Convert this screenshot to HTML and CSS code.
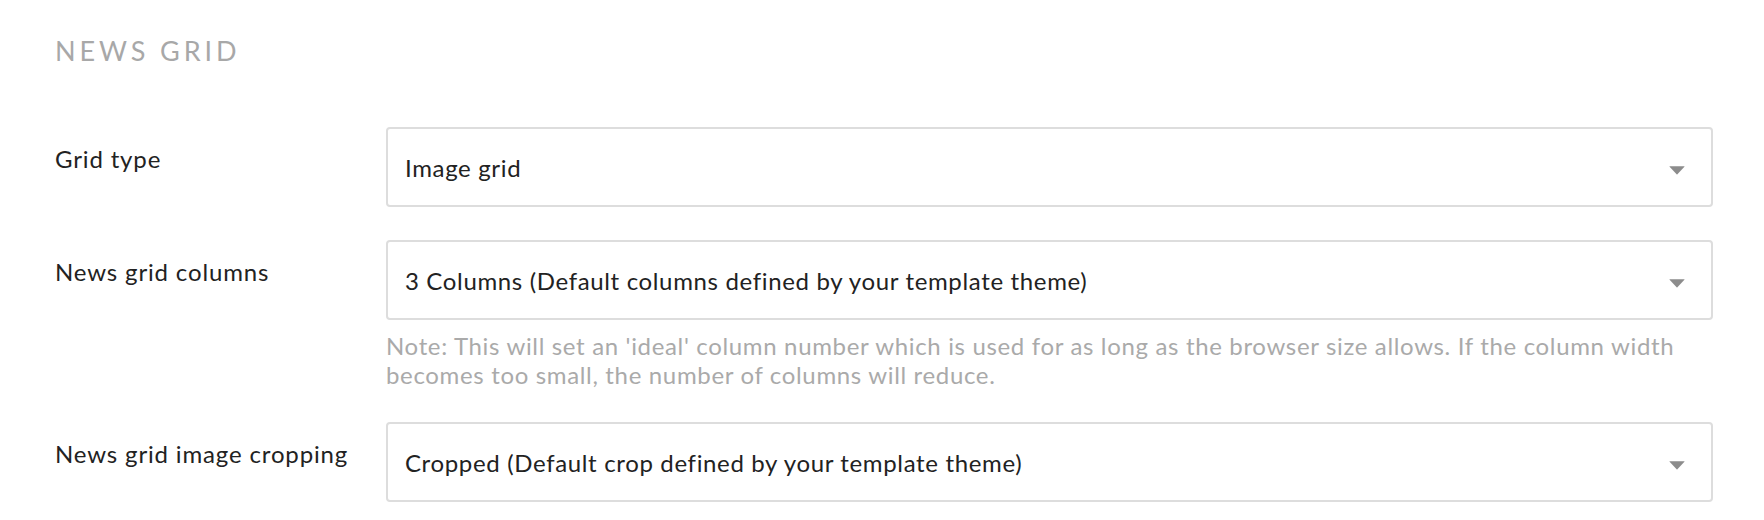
FILE: index.html
```html
<!DOCTYPE html>
<html lang="en">
<head>
<meta charset="utf-8">
<title>News grid settings</title>
<link rel="stylesheet" href="styles.css">
</head>
<body>
<div class="page">
  <h2 class="section-title">NEWS GRID</h2>
  <div class="form">
    <div class="row">
      <label class="label">Grid type</label>
      <div class="field">
        <div class="select">
          <span class="value">Image grid</span>
          <svg class="caret" width="16" height="9" viewBox="0 0 16 9"><path d="M0.8 0.2 H15.2 Q15.8 0.2 15.4 0.8 L8.4 8.2 Q8 8.6 7.6 8.2 L0.6 0.8 Q0.2 0.2 0.8 0.2 Z" fill="#8c8c8c"/></svg>
        </div>
      </div>
    </div>
    <div class="row">
      <label class="label">News grid columns</label>
      <div class="field">
        <div class="select">
          <span class="value">3 Columns (Default columns defined by your template theme)</span>
          <svg class="caret" width="16" height="9" viewBox="0 0 16 9"><path d="M0.8 0.2 H15.2 Q15.8 0.2 15.4 0.8 L8.4 8.2 Q8 8.6 7.6 8.2 L0.6 0.8 Q0.2 0.2 0.8 0.2 Z" fill="#8c8c8c"/></svg>
        </div>
        <p class="note">Note: This will set an 'ideal' column number which is used for as long as the browser size allows. If the column width becomes too small, the number of columns will reduce.</p>
      </div>
    </div>
    <div class="row">
      <label class="label">News grid image cropping</label>
      <div class="field">
        <div class="select">
          <span class="value">Cropped (Default crop defined by your template theme)</span>
          <svg class="caret" width="16" height="9" viewBox="0 0 16 9"><path d="M0.8 0.2 H15.2 Q15.8 0.2 15.4 0.8 L8.4 8.2 Q8 8.6 7.6 8.2 L0.6 0.8 Q0.2 0.2 0.8 0.2 Z" fill="#8c8c8c"/></svg>
        </div>
      </div>
    </div>
  </div>
</div>
</body>
</html>
```

FILE: styles.css
```css
html, body {
  margin: 0;
  padding: 0;
  background: #ffffff;
}

body {
  font-family: "Lato", "Liberation Sans", sans-serif;
  color: #222222;
}

.page {
  padding: 35px 51px 0 55px;
}

.section-title {
  margin: 0;
  font-size: 27px;
  line-height: 1.2;
  font-weight: 400;
  letter-spacing: 3.9px;
  color: #a8a8a8;
}

.form {
  margin-top: 60px;
  display: flex;
  flex-direction: column;
  gap: 33px;
}

.row {
  display: grid;
  grid-template-columns: 331px 1fr;
}

.label {
  font-size: 24px;
  line-height: 29px;
  letter-spacing: 0.85px;
  padding-top: 17px;
  color: #222222;
}

.field {
  min-width: 0;
}

.select {
  box-sizing: border-box;
  height: 80px;
  border: 2px solid #dddddd;
  border-radius: 4px;
  padding: 0 26px 0 17px;
  display: flex;
  align-items: center;
  justify-content: space-between;
  background: #ffffff;
}

.value {
  font-size: 24px;
  line-height: 29px;
  letter-spacing: 0.65px;
  color: #222222;
}

.caret {
  display: block;
  margin-top: 6px;
}

.note {
  margin: 11px 0 0 0;
  font-size: 24px;
  line-height: 29px;
  letter-spacing: 0.66px;
  color: #aaaaaa;
}
```
